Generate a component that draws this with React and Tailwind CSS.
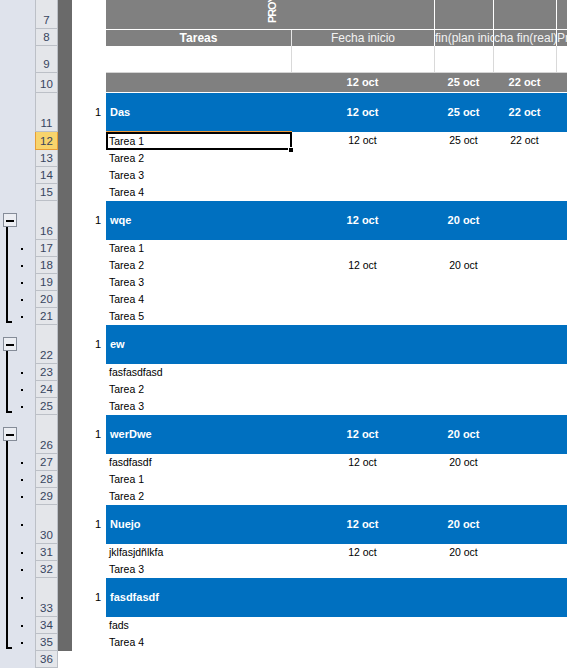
import React from 'react';

const HEIGHT = { title: 29, head: 17, blank: 27, total: 20, group: 39, task: 17, sel: 18, empty: 17 };
const HCLS = {
    title: 'h-[29px]', head: 'h-[17px]', blank: 'h-[27px]', total: 'h-[20px]',
    group: 'h-[39px]', task: 'h-[17px]', sel: 'h-[18px]', empty: 'h-[17px]',
};

const rows = [
    { n: 7, k: 'title' },
    { n: 8, k: 'head' },
    { n: 9, k: 'blank' },
    { n: 10, k: 'total', d: ['12 oct', '25 oct', '22 oct'] },
    { n: 11, k: 'group', name: 'Das', d: ['12 oct', '25 oct', '22 oct'] },
    { n: 12, k: 'sel', name: 'Tarea 1', d: ['12 oct', '25 oct', '22 oct'] },
    { n: 13, k: 'task', name: 'Tarea 2' },
    { n: 14, k: 'task', name: 'Tarea 3' },
    { n: 15, k: 'task', name: 'Tarea 4' },
    { n: 16, k: 'group', name: 'wqe', d: ['12 oct', '20 oct'] },
    { n: 17, k: 'task', name: 'Tarea 1' },
    { n: 18, k: 'task', name: 'Tarea 2', d: ['12 oct', '20 oct'] },
    { n: 19, k: 'task', name: 'Tarea 3' },
    { n: 20, k: 'task', name: 'Tarea 4' },
    { n: 21, k: 'task', name: 'Tarea 5' },
    { n: 22, k: 'group', name: 'ew' },
    { n: 23, k: 'task', name: 'fasfasdfasd' },
    { n: 24, k: 'task', name: 'Tarea 2' },
    { n: 25, k: 'task', name: 'Tarea 3' },
    { n: 26, k: 'group', name: 'werDwe', d: ['12 oct', '20 oct'] },
    { n: 27, k: 'task', name: 'fasdfasdf', d: ['12 oct', '20 oct'] },
    { n: 28, k: 'task', name: 'Tarea 1' },
    { n: 29, k: 'task', name: 'Tarea 2' },
    { n: 30, k: 'group', name: 'Nuejo', d: ['12 oct', '20 oct'] },
    { n: 31, k: 'task', name: 'jklfasjdñlkfa', d: ['12 oct', '20 oct'] },
    { n: 32, k: 'task', name: 'Tarea 3' },
    { n: 33, k: 'group', name: 'fasdfasdf' },
    { n: 34, k: 'task', name: 'fads' },
    { n: 35, k: 'task', name: 'Tarea 4' },
    { n: 36, k: 'empty' },
];

// row top positions, used by the outline drawing in the gutter
const tops = {};
let acc = 0;
rows.forEach((r) => {
    tops[r.n] = { top: acc, h: HEIGHT[r.k] };
    acc += HEIGHT[r.k];
});

const outline = [
    { box: 16, from: 17, to: 21 },
    { box: 22, from: 23, to: 25 },
    { box: 26, from: 27, to: 35 },
];

function Gutter() {
    return (
        <div className="w-[35px] h-full bg-[#dfe3ec] shrink-0">
            <svg width="35" height="668">
                {outline.map((g) => {
                    const bt = tops[g.box].top;
                    const end = tops[g.to].top + tops[g.to].h - 2;
                    const dots = [];
                    for (let i = g.from; i <= g.to; i++) {
                        dots.push(
                            <rect key={i} x="21" y={Math.round(tops[i].top + tops[i].h / 2) - 1} width="2" height="2" fill="#000" />
                        );
                    }
                    return (
                        <g key={g.box}>
                            <rect x="3.5" y={bt + 12.5} width="13" height="13" fill="#eceef3" stroke="#858c98" />
                            <rect x="6" y={bt + 19} width="8" height="2" fill="#000" />
                            <rect x="6" y={bt + 26} width="2" height={end - bt - 26} fill="#000" />
                            <rect x="6" y={end - 2} width="6" height="2" fill="#000" />
                            {dots}
                        </g>
                    );
                })}
            </svg>
        </div>
    );
}

function RowHeader({ n, sel }) {
    return (
        <div
            className={`w-[23px] shrink-0 flex items-end justify-center pb-[1px] text-[11.5px] leading-[13px] text-[#37455f] border-b border-x
                ${sel ? 'bg-[#f8d46c] border-[#e79d36]' : 'bg-[#e4e6ea] border-[#bcc0c7]'}`}
        >
            {n}
        </div>
    );
}

function Dates({ d = [], bold }) {
    const cls = bold ? 'text-[11px] font-bold text-white' : 'text-[10.5px] text-black';
    return (
        <>
            <div className={`w-[143px] shrink-0 flex items-center justify-center ${cls}`}>{d[0]}</div>
            <div className={`w-[59px] shrink-0 flex items-center justify-center ${cls}`}>{d[1]}</div>
            <div className={`w-[63px] shrink-0 flex items-center justify-center ${cls}`}>{d[2]}</div>
            <div className="flex-1" />
        </>
    );
}

function Cells({ r }) {
    if (r.k === 'title') {
        return (
            <div className="flex-1 flex bg-[#808080]">
                <div className="w-[328px] shrink-0 flex items-end justify-center pb-[6px] pl-[4px] overflow-hidden">
                    <span className="[writing-mode:vertical-rl] rotate-180 text-[11px] font-bold text-white leading-none whitespace-nowrap tracking-[-1.2px]">
                        PROYECTO
                    </span>
                </div>
                <div className="w-[59px] shrink-0 border-l border-white" />
                <div className="w-[63px] shrink-0 border-l border-white" />
                <div className="flex-1 border-l border-white" />
            </div>
        );
    }
    if (r.k === 'head') {
        return (
            <div className="flex-1 flex bg-[#808080] border-t border-white text-[12px] text-[#f2f2f2] whitespace-nowrap">
                <div className="w-[185px] shrink-0 flex items-center justify-center font-bold text-white">Tareas</div>
                <div className="w-[143px] shrink-0 flex items-center justify-center border-l border-[#e6e6e6]">Fecha inicio</div>
                <div className="w-[59px] shrink-0 flex items-center border-l border-white overflow-hidden">fin(plan inicial)</div>
                <div className="w-[63px] shrink-0 flex items-center border-l border-white overflow-hidden">cha fin(real)</div>
                <div className="flex-1 flex items-center border-l border-white overflow-hidden">Progreso</div>
            </div>
        );
    }
    if (r.k === 'blank') {
        return (
            <div className="flex-1 flex bg-white border-b border-[#d4d4d4]">
                <div className="w-[185px] shrink-0" />
                <div className="w-[143px] shrink-0 border-l border-[#d9d9d9]" />
                <div className="w-[59px] shrink-0 border-l border-[#d9d9d9]" />
                <div className="w-[63px] shrink-0 border-l border-[#d9d9d9]" />
                <div className="flex-1 border-l border-[#d9d9d9]" />
            </div>
        );
    }
    if (r.k === 'total') {
        return (
            <div className="flex-1 flex bg-[#808080] border-b border-white">
                <div className="w-[185px] shrink-0" />
                <Dates d={r.d} bold />
            </div>
        );
    }
    if (r.k === 'group') {
        return (
            <div className="flex-1 flex bg-[#0070c0]">
                <div className="w-[185px] shrink-0 flex items-center pl-[4px] text-[11px] font-bold text-white">{r.name}</div>
                <Dates d={r.d} bold />
            </div>
        );
    }
    if (r.k === 'empty') return <div className="flex-1 bg-white" />;
    return (
        <div className="flex-1 flex bg-white">
            <div className="w-[185px] shrink-0 relative flex items-center pl-[3px] pt-[1px] text-[10.5px] text-black">
                {r.name}
                {r.k === 'sel' && (
                    <>
                        <div className="absolute left-0 right-[-1px] top-[-1px] h-[1px] bg-[#ee9a3a]" />
                        <div className="absolute left-0 right-[-1px] top-0 bottom-0 border-2 border-black" />
                        <div className="absolute right-[-3px] bottom-[-3px] w-[6px] h-[6px] bg-black border border-white" />
                    </>
                )}
            </div>
            <Dates d={r.d} />
        </div>
    );
}

export default function App() {
    return (
        <div className="w-[567px] h-[668px] overflow-hidden flex bg-white font-['Liberation_Sans',Arial,sans-serif]">
            <Gutter />
            <div className="flex-1 flex flex-col">
                {rows.map((r) => (
                    <div key={r.n} className={`flex shrink-0 ${HCLS[r.k]}`}>
                        <RowHeader n={r.n} sel={r.k === 'sel'} />
                        <div className={`w-[14px] shrink-0 ${r.k === 'empty' ? 'bg-white' : 'bg-[#6a6a6a]'}`} />
                        <div className="w-[34px] shrink-0 flex items-center justify-end pr-[5px] text-[11px] text-black">
                            {r.k === 'group' ? '1' : ''}
                        </div>
                        <Cells r={r} />
                    </div>
                ))}
            </div>
        </div>
    );
}
